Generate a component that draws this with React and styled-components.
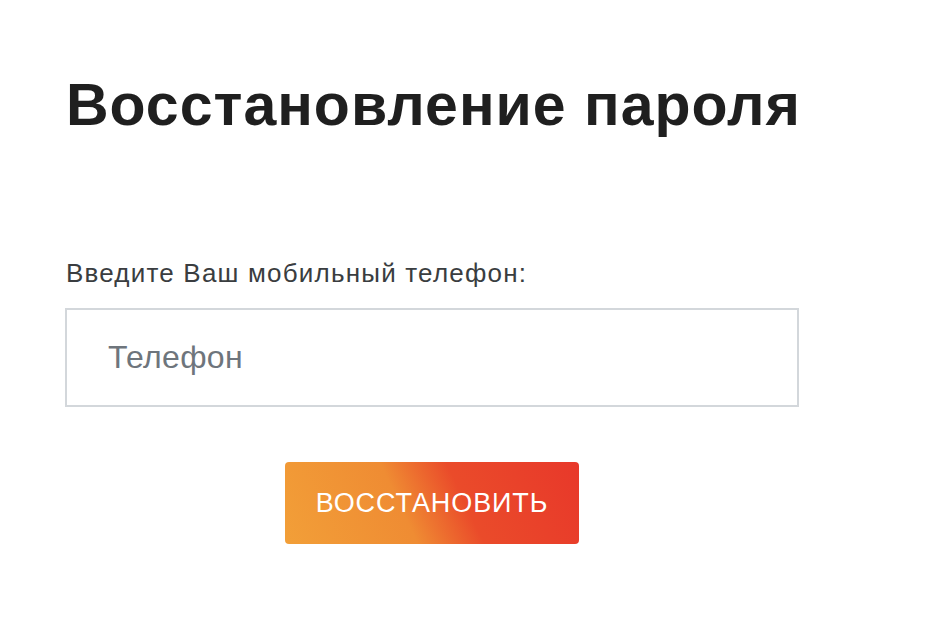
import React from 'react';
import styled, { createGlobalStyle } from 'styled-components';

const GlobalStyle = createGlobalStyle`
    html, body {
        margin: 0;
        padding: 0;
        background: #fff;
        font-family: "Liberation Sans", Arial, sans-serif;
    }
`;

const Page = styled.div`
    padding: 73px 0 0 65px;
`;

const Form = styled.form`
    width: 734px;
    display: flex;
    flex-direction: column;
`;

const Heading = styled.h1`
    margin: 0 0 0 1px;
    font-size: 59px;
    line-height: 64px;
    font-weight: 700;
    color: #1f1f1f;
    letter-spacing: 1px;
    white-space: nowrap;
`;

const Label = styled.label`
    margin: 121px 0 0 1px;
    font-size: 26px;
    line-height: 30px;
    color: #3a3d40;
    letter-spacing: 1.2px;
    white-space: nowrap;
`;

const Input = styled.input`
    box-sizing: border-box;
    margin-top: 20px;
    width: 734px;
    height: 99px;
    border: 2px solid #d3d7db;
    padding: 0 41px;
    font-family: inherit;
    font-size: 32px;
    letter-spacing: 0.3px;
    color: #333;
    outline: none;
    &::placeholder {
        color: #6e757c;
    }
`;

const Button = styled.button`
    align-self: center;
    margin-top: 55px;
    width: 294px;
    height: 82px;
    border: none;
    border-radius: 4px;
    background: linear-gradient(65deg, #f29f38 0%, #ef8c33 40%, #ea4b2a 60%, #e8382a 100%);
    color: #fff;
    font-family: inherit;
    font-size: 27px;
    letter-spacing: 0.9px;
    text-transform: uppercase;
    cursor: pointer;
`;

export default function App() {
    return (
        <Page>
            <GlobalStyle />
            <Form onSubmit={e => e.preventDefault()}>
                <Heading>Восстановление пароля</Heading>
                <Label htmlFor="phone">Введите Ваш мобильный телефон:</Label>
                <Input id="phone" type="tel" placeholder="Телефон" />
                <Button type="submit">Восстановить</Button>
            </Form>
        </Page>
    );
}
